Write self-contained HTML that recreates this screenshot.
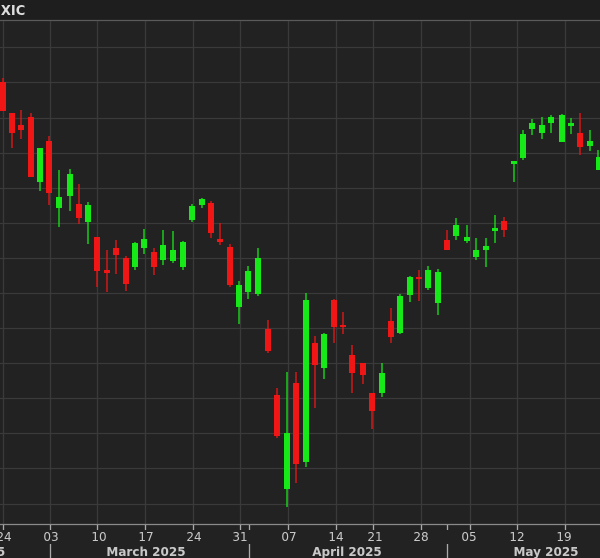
<!DOCTYPE html>
<html><head><meta charset="utf-8"><style>
html,body{margin:0;padding:0;background:#222;}
svg{display:block}
.gl{stroke:#3a3a3a;stroke-width:1}
.r line,.r rect{stroke:#f01616;fill:#f01616}
.g line,.g rect{stroke:#17e817;fill:#17e817}
line{stroke-width:1.3}
rect{stroke-width:0}
text{font-family:"DejaVu Sans","Liberation Sans",sans-serif;fill:#c8c8c8}
</style></head><body>
<svg width="600" height="558" viewBox="0 0 600 558" xmlns="http://www.w3.org/2000/svg">
<rect x="0" y="0" width="600" height="558" fill="#222"/>
<rect x="0" y="0" width="600" height="20" fill="#1e1e1e"/>
<text x="-4" y="15" font-size="13" font-weight="bold" fill="#ddd" style="fill:#ddd">IXIC</text>
<line x1="0" y1="20.5" x2="600" y2="20.5" stroke="#5a5a5a" stroke-width="1"/>
<g class="gl">
<line x1="0" y1="47.5" x2="600" y2="47.5"/><line x1="0" y1="82.5" x2="600" y2="82.5"/>
<line x1="0" y1="118.5" x2="600" y2="118.5"/><line x1="0" y1="153.5" x2="600" y2="153.5"/>
<line x1="0" y1="188.5" x2="600" y2="188.5"/><line x1="0" y1="223.5" x2="600" y2="223.5"/>
<line x1="0" y1="258.5" x2="600" y2="258.5"/><line x1="0" y1="293.5" x2="600" y2="293.5"/>
<line x1="0" y1="328.5" x2="600" y2="328.5"/><line x1="0" y1="363.5" x2="600" y2="363.5"/>
<line x1="0" y1="398.5" x2="600" y2="398.5"/><line x1="0" y1="433.5" x2="600" y2="433.5"/>
<line x1="0" y1="468.5" x2="600" y2="468.5"/><line x1="0" y1="504.5" x2="600" y2="504.5"/>
<line x1="3.5" y1="21" x2="3.5" y2="524"/><line x1="50.5" y1="21" x2="50.5" y2="524"/>
<line x1="97.5" y1="21" x2="97.5" y2="524"/><line x1="145.5" y1="21" x2="145.5" y2="524"/>
<line x1="193.5" y1="21" x2="193.5" y2="524"/><line x1="240.5" y1="21" x2="240.5" y2="524"/>
<line x1="288.5" y1="21" x2="288.5" y2="524"/><line x1="336.5" y1="21" x2="336.5" y2="524"/>
<line x1="373.5" y1="21" x2="373.5" y2="524"/><line x1="421.5" y1="21" x2="421.5" y2="524"/>
<line x1="470.5" y1="21" x2="470.5" y2="524"/><line x1="517.5" y1="21" x2="517.5" y2="524"/>
<line x1="565.5" y1="21" x2="565.5" y2="524"/>
</g>
<!-- candles -->
<g class="r"><line x1="3" y1="78" x2="3" y2="111"/><rect x="0" y="82" width="6" height="29"/></g>
<g class="r"><line x1="12" y1="113" x2="12" y2="148"/><rect x="9" y="113" width="6" height="20"/></g>
<g class="r"><line x1="21" y1="110" x2="21" y2="139"/><rect x="18" y="125" width="6" height="5"/></g>
<g class="r"><line x1="31" y1="113" x2="31" y2="177"/><rect x="28" y="117" width="6" height="60"/></g>
<g class="g"><line x1="40" y1="148" x2="40" y2="191"/><rect x="37" y="148" width="6" height="34"/></g>
<g class="r"><line x1="49" y1="136" x2="49" y2="205"/><rect x="46" y="141" width="6" height="52"/></g>
<g class="g"><line x1="59" y1="170" x2="59" y2="227"/><rect x="56" y="197" width="6" height="11"/></g>
<g class="g"><line x1="70" y1="169" x2="70" y2="211"/><rect x="67" y="174" width="6" height="22"/></g>
<g class="r"><line x1="79" y1="184" x2="79" y2="224"/><rect x="76" y="204" width="6" height="14"/></g>
<g class="g"><line x1="88" y1="202" x2="88" y2="244"/><rect x="85" y="205" width="6" height="17"/></g>
<g class="r"><line x1="97" y1="237" x2="97" y2="287"/><rect x="94" y="237" width="6" height="34"/></g>
<g class="r"><line x1="107" y1="250" x2="107" y2="292"/><rect x="104" y="270" width="6" height="3"/></g>
<g class="r"><line x1="116" y1="240" x2="116" y2="274"/><rect x="113" y="248" width="6" height="7"/></g>
<g class="r"><line x1="126" y1="256" x2="126" y2="291"/><rect x="123" y="258" width="6" height="26"/></g>
<g class="g"><line x1="135" y1="242" x2="135" y2="270"/><rect x="132" y="243" width="6" height="24"/></g>
<g class="g"><line x1="144" y1="229" x2="144" y2="254"/><rect x="141" y="239" width="6" height="9"/></g>
<g class="r"><line x1="154" y1="248" x2="154" y2="275"/><rect x="151" y="252" width="6" height="15"/></g>
<g class="g"><line x1="163" y1="230" x2="163" y2="265"/><rect x="160" y="245" width="6" height="15"/></g>
<g class="g"><line x1="173" y1="231" x2="173" y2="263"/><rect x="170" y="250" width="6" height="11"/></g>
<g class="g"><line x1="183" y1="241" x2="183" y2="270"/><rect x="180" y="242" width="6" height="25"/></g>
<g class="g"><line x1="192" y1="204" x2="192" y2="222"/><rect x="189" y="206" width="6" height="14"/></g>
<g class="g"><line x1="202" y1="198" x2="202" y2="208"/><rect x="199" y="199" width="6" height="6"/></g>
<g class="r"><line x1="211" y1="201" x2="211" y2="238"/><rect x="208" y="203" width="6" height="30"/></g>
<g class="r"><line x1="220" y1="223" x2="220" y2="245"/><rect x="217" y="239" width="6" height="3"/></g>
<g class="r"><line x1="230" y1="244" x2="230" y2="287"/><rect x="227" y="247" width="6" height="38"/></g>
<g class="g"><line x1="239" y1="281" x2="239" y2="324"/><rect x="236" y="285" width="6" height="22"/></g>
<g class="g"><line x1="248" y1="266" x2="248" y2="299"/><rect x="245" y="271" width="6" height="21"/></g>
<g class="g"><line x1="258" y1="248" x2="258" y2="296"/><rect x="255" y="258" width="6" height="36"/></g>
<g class="r"><line x1="268" y1="320" x2="268" y2="353"/><rect x="265" y="329" width="6" height="22"/></g>
<g class="r"><line x1="277" y1="388" x2="277" y2="438"/><rect x="274" y="395" width="6" height="41"/></g>
<g class="g"><line x1="287" y1="372" x2="287" y2="507"/><rect x="284" y="433" width="6" height="56"/></g>
<g class="r"><line x1="296" y1="372" x2="296" y2="483"/><rect x="293" y="383" width="6" height="81"/></g>
<g class="g"><line x1="306" y1="293" x2="306" y2="467"/><rect x="303" y="300" width="6" height="162"/></g>
<g class="r"><line x1="315" y1="336" x2="315" y2="408"/><rect x="312" y="343" width="6" height="22"/></g>
<g class="g"><line x1="324" y1="333" x2="324" y2="379"/><rect x="321" y="334" width="6" height="34"/></g>
<g class="r"><line x1="334" y1="299" x2="334" y2="343"/><rect x="331" y="300" width="6" height="27"/></g>
<g class="r"><line x1="343" y1="312" x2="343" y2="334"/><rect x="340" y="325" width="6" height="2"/></g>
<g class="r"><line x1="352" y1="345" x2="352" y2="393"/><rect x="349" y="355" width="6" height="18"/></g>
<g class="r"><line x1="363" y1="363" x2="363" y2="384"/><rect x="360" y="363" width="6" height="12"/></g>
<g class="r"><line x1="372" y1="393" x2="372" y2="429"/><rect x="369" y="393" width="6" height="18"/></g>
<g class="g"><line x1="382" y1="363" x2="382" y2="397"/><rect x="379" y="373" width="6" height="20"/></g>
<g class="r"><line x1="391" y1="308" x2="391" y2="343"/><rect x="388" y="321" width="6" height="16"/></g>
<g class="g"><line x1="400" y1="294" x2="400" y2="334"/><rect x="397" y="296" width="6" height="37"/></g>
<g class="g"><line x1="410" y1="276" x2="410" y2="302"/><rect x="407" y="277" width="6" height="18"/></g>
<g class="r"><line x1="419" y1="270" x2="419" y2="301"/><rect x="416" y="277" width="6" height="2"/></g>
<g class="g"><line x1="428" y1="266" x2="428" y2="290"/><rect x="425" y="270" width="6" height="18"/></g>
<g class="g"><line x1="438" y1="269" x2="438" y2="315"/><rect x="435" y="272" width="6" height="31"/></g>
<g class="r"><line x1="447" y1="230" x2="447" y2="250"/><rect x="444" y="240" width="6" height="10"/></g>
<g class="g"><line x1="456" y1="218" x2="456" y2="240"/><rect x="453" y="225" width="6" height="11"/></g>
<g class="g"><line x1="467" y1="225" x2="467" y2="243"/><rect x="464" y="237" width="6" height="4"/></g>
<g class="g"><line x1="476" y1="238" x2="476" y2="260"/><rect x="473" y="250" width="6" height="7"/></g>
<g class="g"><line x1="486" y1="238" x2="486" y2="267"/><rect x="483" y="246" width="6" height="4"/></g>
<g class="g"><line x1="495" y1="215" x2="495" y2="243"/><rect x="492" y="228" width="6" height="3"/></g>
<g class="r"><line x1="504" y1="217" x2="504" y2="237"/><rect x="501" y="221" width="6" height="9"/></g>
<g class="g"><line x1="514" y1="161" x2="514" y2="182"/><rect x="511" y="161" width="6" height="3"/></g>
<g class="g"><line x1="523" y1="130" x2="523" y2="160"/><rect x="520" y="134" width="6" height="24"/></g>
<g class="g"><line x1="532" y1="119" x2="532" y2="135"/><rect x="529" y="123" width="6" height="6"/></g>
<g class="g"><line x1="542" y1="117" x2="542" y2="139"/><rect x="539" y="125" width="6" height="8"/></g>
<g class="g"><line x1="551" y1="115" x2="551" y2="133"/><rect x="548" y="117" width="6" height="6"/></g>
<g class="g"><line x1="562" y1="114" x2="562" y2="142"/><rect x="559" y="115" width="6" height="27"/></g>
<g class="g"><line x1="571" y1="118" x2="571" y2="134"/><rect x="568" y="123" width="6" height="3"/></g>
<g class="r"><line x1="580" y1="113" x2="580" y2="155"/><rect x="577" y="133" width="6" height="14"/></g>
<g class="g"><line x1="590" y1="130" x2="590" y2="151"/><rect x="587" y="141" width="6" height="5"/></g>
<g class="g"><line x1="598" y1="150" x2="598" y2="170"/><rect x="596" y="157" width="6" height="13"/></g>
<!-- axis -->
<line x1="0" y1="524.5" x2="600" y2="524.5" stroke="#8a8a8a" stroke-width="1"/>
<g stroke="#aaa" stroke-width="1">
<line x1="3.5" y1="525" x2="3.5" y2="530"/><line x1="97.5" y1="525" x2="97.5" y2="530"/>
<line x1="145.5" y1="525" x2="145.5" y2="530"/><line x1="193.5" y1="525" x2="193.5" y2="530"/>
<line x1="240.5" y1="525" x2="240.5" y2="530"/><line x1="288.5" y1="525" x2="288.5" y2="530"/>
<line x1="336.5" y1="525" x2="336.5" y2="530"/><line x1="373.5" y1="525" x2="373.5" y2="530"/>
<line x1="421.5" y1="525" x2="421.5" y2="530"/><line x1="470.5" y1="525" x2="470.5" y2="530"/>
<line x1="517.5" y1="525" x2="517.5" y2="530"/><line x1="565.5" y1="525" x2="565.5" y2="530"/>
<line x1="50.5" y1="525" x2="50.5" y2="530"/>
<line x1="50.5" y1="544" x2="50.5" y2="558"/><line x1="249.5" y1="525" x2="249.5" y2="530"/>
<line x1="249.5" y1="544" x2="249.5" y2="558"/><line x1="447.5" y1="525" x2="447.5" y2="530"/>
<line x1="447.5" y1="544" x2="447.5" y2="558"/>
</g>
<g font-size="12" text-anchor="middle">
<text x="4" y="541">24</text><text x="51" y="541">03</text><text x="99" y="541">10</text>
<text x="146" y="541">17</text><text x="194" y="541">24</text><text x="240" y="541">31</text>
<text x="289" y="541">07</text><text x="336" y="541">14</text><text x="375" y="541">21</text>
<text x="421" y="541">28</text><text x="469" y="541">05</text><text x="517" y="541">12</text>
<text x="564" y="541">19</text>
</g>
<g font-size="12" font-weight="bold" text-anchor="middle">
<text x="1" y="556">5</text>
<text x="146" y="556">March 2025</text>
<text x="347" y="556">April 2025</text>
<text x="546" y="556">May 2025</text>
</g>
</svg>
</body></html>
